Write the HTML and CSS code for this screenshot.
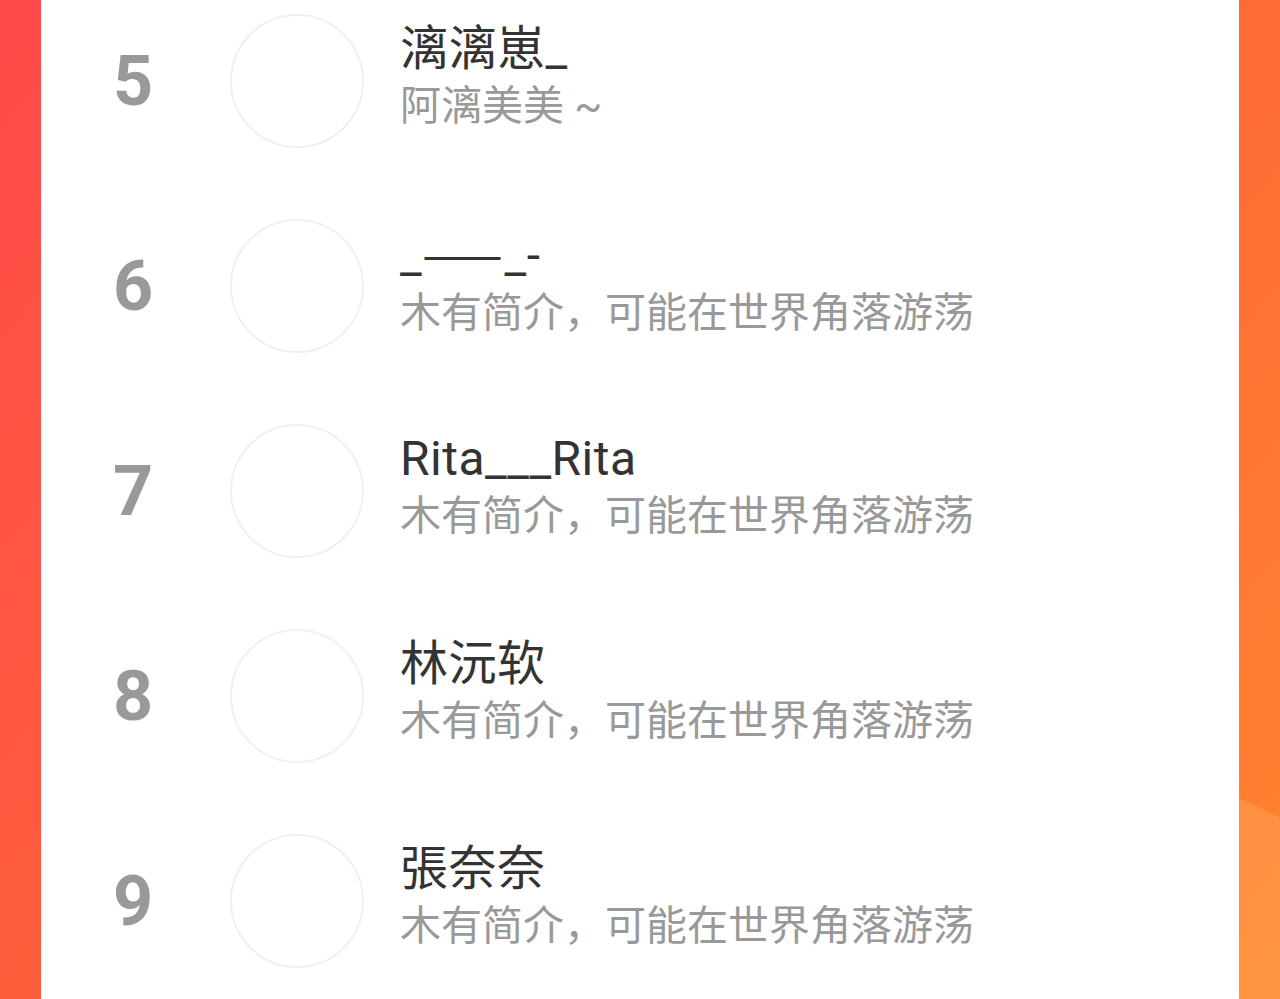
FILE: index.html
```html
<!DOCTYPE html>
<html lang="zh-CN">
<head>
  <meta charset="UTF-8">
  <title>排行榜</title>
  <link rel="stylesheet" href="styles.css">
</head>
<body>
<div class="page">
  <div class="card">
    <ul class="rank-list">
      <li class="rank-item">
        <div class="rank-num">5</div>
        <div class="avatar"></div>
        <div class="info">
          <p class="name">漓漓崽_</p>
          <p class="desc">阿漓美美 ~</p>
        </div>
      </li>
      <li class="rank-item">
        <div class="rank-num">6</div>
        <div class="avatar"></div>
        <div class="info">
          <p class="name">_<span class="cjk">——</span>_-</p>
          <p class="desc">木有简介，可能在世界角落游荡</p>
        </div>
      </li>
      <li class="rank-item">
        <div class="rank-num">7</div>
        <div class="avatar"></div>
        <div class="info">
          <p class="name">Rita___Rita</p>
          <p class="desc">木有简介，可能在世界角落游荡</p>
        </div>
      </li>
      <li class="rank-item">
        <div class="rank-num">8</div>
        <div class="avatar"></div>
        <div class="info">
          <p class="name">林沅软</p>
          <p class="desc">木有简介，可能在世界角落游荡</p>
        </div>
      </li>
      <li class="rank-item">
        <div class="rank-num">9</div>
        <div class="avatar"></div>
        <div class="info">
          <p class="name">張奈奈</p>
          <p class="desc">木有简介，可能在世界角落游荡</p>
        </div>
      </li>
    </ul>
  </div>
</div>
</body>
</html>
```

FILE: styles.css
```css
*{padding: 0; margin: 0;}
li{list-style: none;}
body{
  font-family: Roboto, "Noto Sans CJK SC", sans-serif;
}
.page{
  height: 100vh;
  overflow: hidden;
  padding: 0 41px;
  background:
    radial-gradient(circle 600px at 998px 1347px, rgba(255,200,120,.24) 99.8%, transparent 100%),
    linear-gradient(128deg, #ff4a4a 0%, #ff6338 50%, #ff8530 100%);
}
.card{
  height: 100%;
  overflow: hidden;
  background-color: #fff;
}
.rank-list{
  margin-top: -22px;
}
.rank-item{
  display: flex;
  align-items: center;
  height: 205px;
}
.rank-num{
  width: 184px;
  font-size: 70px;
  font-weight: bold;
  color: #999;
  text-align: center;
}
.avatar{
  flex: none;
  width: 134px;
  height: 134px;
  margin: 0 36px 0 5px;
  border: 2px solid #f0f0f0;
  border-radius: 50%;
  box-sizing: border-box;
}
.info{
  margin-top: -6px;
}
.name{
  font-size: 48px;
  line-height: 57px;
  letter-spacing: .5px;
  color: #333;
}
.cjk{
  font-family: "Noto Sans CJK SC", sans-serif;
  letter-spacing: 2px;
}
.desc{
  font-size: 41px;
  line-height: 58px;
  color: #999;
}
```
